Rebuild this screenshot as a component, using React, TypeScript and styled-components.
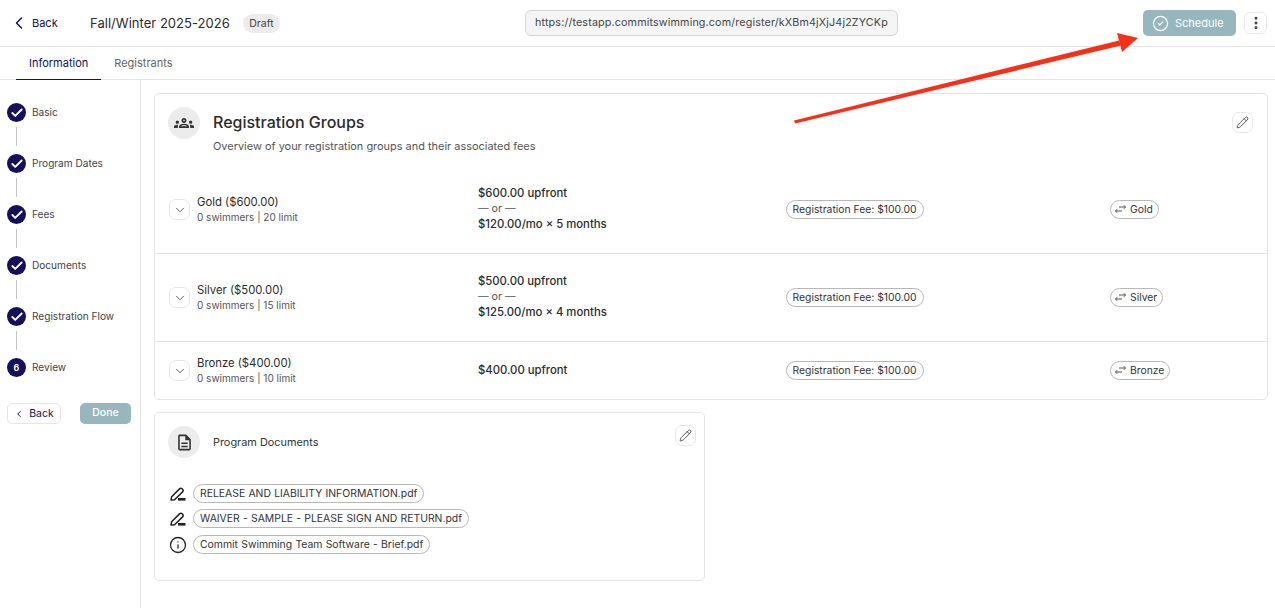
import React from 'react'
import styled, { createGlobalStyle } from 'styled-components'
import { ChevronLeft, ChevronDown, Check, CircleCheck, EllipsisVertical, Pencil, Info } from 'lucide-react'
import { MdOutlineGroups, MdOutlineDescription } from 'react-icons/md'

const Global = createGlobalStyle`
    html, body {
        margin: 0;
        padding: 0;
        background: #fff;
        font-family: Inter, "Liberation Sans", sans-serif;
        color: #2b2b2b;
    }
`

const Page = styled.div`
    position: relative;
    width: 1275px;
    height: 608px;
    overflow: hidden;
    background: #fff;
`

const TopBar = styled.header`
    height: 46px;
    border-bottom: 1px solid #e4e4e4;
    display: grid;
    grid-template-columns: 512px auto 1fr;
    align-items: center;
    padding: 0 8px 0 13px;
`

const TopLeft = styled.div`
    display: flex;
    align-items: center;
`

const BackLink = styled.span`
    display: flex;
    align-items: center;
    gap: 3px;
    width: 77px;
    margin-left: -4px;
    margin-right: 4px;
    font-size: 11px;
    color: #14105a;
`

const ProgramTitle = styled.span`
    font-size: 13px;
    letter-spacing: 0.03px;
    color: #2b2b2b;
    margin-right: 13px;
`

const DraftBadge = styled.span`
    background: #ececec;
    color: #444;
    font-size: 10.5px;
    border-radius: 10px;
    padding: 3px 6.5px;
`

const UrlBox = styled.div`
    width: 373px;
    height: 26px;
    box-sizing: border-box;
    background: #f5f5f5;
    border: 1px solid #d4d4d4;
    border-radius: 6px;
    font-size: 10.75px;
    line-height: 24px;
    letter-spacing: 0.14px;
    text-align: center;
    color: #444;
    white-space: nowrap;
`

const TopRight = styled.div`
    display: flex;
    justify-content: flex-end;
    align-items: center;
    gap: 8px;
`

const ScheduleButton = styled.div`
    width: 93px;
    height: 26px;
    box-sizing: border-box;
    padding-left: 9px;
    background: #97b6bd;
    border-radius: 5px;
    color: #fff;
    font-size: 11px;
    display: flex;
    align-items: center;
    gap: 6px;
`

const MoreButton = styled.div`
    width: 23px;
    height: 22px;
    box-sizing: border-box;
    border: 1px solid #e8e8e8;
    border-radius: 6px;
    display: flex;
    align-items: center;
    justify-content: center;
    color: #444;
`

const TabBar = styled.nav`
    height: 32px;
    border-bottom: 1px solid #e4e4e4;
    padding-left: 16px;
    display: flex;
`

const Tab = styled.span<{ $active?: boolean }>`
    height: 32px;
    box-sizing: content-box;
    padding: 0 13px 0 13px;
    font-size: 11px;
    line-height: 32px;
    color: ${p => (p.$active ? '#14105a' : '#666')};
    border-bottom: ${p => (p.$active ? '1px solid #14105a' : '1px solid transparent')};
`

const Body = styled.div`
    display: flex;
    height: 529px;
`

const Sidebar = styled.aside`
    width: 140px;
    border-right: 1px solid #e4e4e4;
    box-sizing: content-box;
    padding-top: 23px;
`

const Steps = styled.ol`
    list-style: none;
    margin: 0;
    padding: 0 0 0 7px;
`

const Step = styled.li`
    display: flex;
    align-items: flex-start;
    gap: 6px;
    height: 51px;
    position: relative;
`

const StepCircle = styled.span`
    width: 19px;
    height: 19px;
    border-radius: 50%;
    background: #14105a;
    color: #fff;
    font-size: 9px;
    font-weight: 600;
    display: flex;
    align-items: center;
    justify-content: center;
    flex: none;
`

const StepLine = styled.span`
    position: absolute;
    left: 9px;
    top: 24px;
    width: 1px;
    height: 19px;
    background: #c4c4c4;
`

const StepLabel = styled.span`
    font-size: 10.1px;
    line-height: 19px;
    color: #444;
`

const SideActions = styled.div`
    display: flex;
    justify-content: space-between;
    padding: 0 9px 0 7px;
    margin-top: -6px;
`

const SideBack = styled.span`
    width: 54px;
    height: 21px;
    box-sizing: border-box;
    border: 1px solid #e6e6e6;
    border-radius: 5px;
    color: #14105a;
    font-size: 10.5px;
    display: flex;
    align-items: center;
    justify-content: center;
    gap: 5px;
`

const DoneButton = styled.span`
    width: 51px;
    height: 21px;
    background: #97b6bd;
    border-radius: 5px;
    color: #fff;
    font-size: 10.5px;
    font-weight: 500;
    text-align: center;
    line-height: 19px;
`

const Main = styled.main`
    flex: 1;
    padding: 13px 7px 0 13px;
    display: flex;
    flex-direction: column;
    align-items: flex-start;
    gap: 12px;
`

const Card = styled.section<{ $wide?: boolean }>`
    position: relative;
    box-sizing: border-box;
    width: ${p => (p.$wide ? '1114px' : '551px')};
    height: ${p => (p.$wide ? '307px' : '169px')};
    border: 1px solid #e4e4e4;
    border-radius: 5px;
`

const CardHead = styled.div`
    display: flex;
    align-items: flex-start;
    gap: 13px;
    padding: 13px 13px 0 13px;
`

const IconBubble = styled.span`
    width: 32px;
    height: 32px;
    border-radius: 50%;
    background: #ececec;
    color: #333;
    display: flex;
    align-items: center;
    justify-content: center;
    flex: none;
`

const CardTitle = styled.h2`
    margin: 6px 0 0;
    font-size: 16px;
    line-height: 19px;
    font-weight: 500;
    color: #2b2b2b;
`

const CardSub = styled.p`
    margin: 7px 0 0;
    font-size: 10.95px;
    line-height: 14px;
    color: #555;
`

const DocsTitle = styled.h2`
    margin: 9px 0 0;
    font-size: 10.9px;
    line-height: 15px;
    font-weight: 400;
    color: #333;
`

const EditButton = styled.span<{ $small?: boolean }>`
    position: absolute;
    top: ${p => (p.$small ? '12px' : '18px')};
    right: ${p => (p.$small ? '8px' : '14px')};
    width: 21px;
    height: 21px;
    box-sizing: border-box;
    border: 1px solid #e8e8e8;
    border-radius: 7px;
    display: flex;
    align-items: center;
    justify-content: center;
    color: #444;
`

const GroupList = styled.div`
    margin-top: 13px;
`

const GroupRow = styled.div<{ $height: number; $divided: boolean }>`
    box-sizing: border-box;
    height: ${p => p.$height}px;
    display: grid;
    grid-template-columns: 309px 308px 324px 1fr;
    align-items: center;
    padding-left: 14px;
    border-top: ${p => (p.$divided ? '1px solid #e4e4e4' : 'none')};
`

const GroupName = styled.div`
    display: flex;
    align-items: center;
    gap: 7px;
`

const Chevron = styled.span`
    width: 21px;
    height: 21px;
    box-sizing: border-box;
    border: 1px solid #e6e6e6;
    border-radius: 7px;
    display: flex;
    align-items: center;
    justify-content: center;
    color: #555;
    flex: none;
`

const GroupTitle = styled.div`
    font-size: 11.3px;
    line-height: 15px;
    color: #2b2b2b;
`

const GroupMeta = styled.div`
    font-size: 10px;
    line-height: 15px;
    color: #555;
`

const PriceBlock = styled.div`
    margin-bottom: 2px;
`

const Price = styled.div`
    font-size: 11.3px;
    line-height: 16px;
    font-weight: 500;
    color: #2b2b2b;
`

const PriceOr = styled.div`
    font-size: 10.6px;
    line-height: 15px;
    color: #555;
`

const Pill = styled.span`
    display: inline-flex;
    align-items: center;
    justify-self: start;
    height: 19px;
    box-sizing: border-box;
    border: 1px solid #b8b8b8;
    border-radius: 10px;
    padding: 0 6.5px 1px 5.5px;
    font-size: 10.35px;
    color: #333;
    white-space: nowrap;
`

const TagPill = styled(Pill)`
    gap: 4px;
    padding: 0 5px 1px 4px;
`

const DocPill = styled(Pill)`
    font-size: 10.4px;
    padding: 0 6px 1px;
    word-spacing: 0.35px;
`

const DocList = styled.div`
    margin-top: 26px;
    padding-left: 14px;
    display: flex;
    flex-direction: column;
`

const DocRow = styled.div<{ $gap: number }>`
    display: flex;
    align-items: center;
    gap: 6px;
    height: 19px;
    margin-bottom: ${p => p.$gap}px;
    color: #222;
`

const DocIcon = styled.span`
    width: 18px;
    display: flex;
    justify-content: center;
`

const Arrow = styled.svg`
    position: absolute;
    left: 0;
    top: 0;
    pointer-events: none;
`

const SwapIcon: React.FC = () => (
    <svg width="11" height="10" viewBox="0 0 11 10" fill="none" stroke="#555" strokeWidth="1">
        <path d="M4 3h6.5M8.8 1.2 10.5 3 8.8 4.8" />
        <path d="M7 7H.5M2.2 5.2.5 7l1.7 1.8" />
    </svg>
)

const SignIcon: React.FC = () => (
    <svg width="16" height="14" viewBox="0 0 16 14" fill="none" stroke="currentColor" strokeWidth="1.5" strokeLinejoin="round">
        <path d="M1 13l.6-3.2 8.2-8.2a1.4 1.4 0 0 1 2 0l1 1a1.4 1.4 0 0 1 0 2L4.6 12.8Z" />
        <rect x="8" y="11" width="7.5" height="2.6" fill="currentColor" stroke="none" />
    </svg>
)

const steps = ['Basic', 'Program Dates', 'Fees', 'Documents', 'Registration Flow', 'Review']

const groups = [
    { name: 'Gold ($600.00)', meta: '0 swimmers | 20 limit', upfront: '$600.00 upfront', monthly: '$120.00/mo × 5 months', tag: 'Gold', height: 87 },
    { name: 'Silver ($500.00)', meta: '0 swimmers | 15 limit', upfront: '$500.00 upfront', monthly: '$125.00/mo × 4 months', tag: 'Silver', height: 88 },
    { name: 'Bronze ($400.00)', meta: '0 swimmers | 10 limit', upfront: '$400.00 upfront', tag: 'Bronze', height: 58 },
]

const App: React.FC = () => {
    return (
        <Page>
            <Global />
            <TopBar>
                <TopLeft>
                    <BackLink>
                        <ChevronLeft size={20} strokeWidth={1.8} />
                        Back
                    </BackLink>
                    <ProgramTitle>Fall/Winter 2025-2026</ProgramTitle>
                    <DraftBadge>Draft</DraftBadge>
                </TopLeft>
                <UrlBox>https://testapp.commitswimming.com/register/kXBm4jXjJ4j2ZYCKp</UrlBox>
                <TopRight>
                    <ScheduleButton>
                        <CircleCheck size={17} strokeWidth={1.7} />
                        Schedule
                    </ScheduleButton>
                    <MoreButton>
                        <EllipsisVertical size={16} strokeWidth={2.4} />
                    </MoreButton>
                </TopRight>
            </TopBar>
            <TabBar>
                <Tab $active>Information</Tab>
                <Tab>Registrants</Tab>
            </TabBar>
            <Body>
                <Sidebar>
                    <Steps>
                        {steps.map((s, i) => (
                            <Step key={s}>
                                <StepCircle>
                                    {i < 5 ? <Check size={14} strokeWidth={3.2} /> : 6}
                                </StepCircle>
                                {i < 5 && <StepLine />}
                                <StepLabel>{s}</StepLabel>
                            </Step>
                        ))}
                    </Steps>
                    <SideActions>
                        <SideBack>
                            <ChevronLeft size={10} strokeWidth={2.4} />
                            Back
                        </SideBack>
                        <DoneButton>Done</DoneButton>
                    </SideActions>
                </Sidebar>
                <Main>
                    <Card $wide>
                        <CardHead>
                            <IconBubble>
                                <MdOutlineGroups size={20} />
                            </IconBubble>
                            <div>
                                <CardTitle>Registration Groups</CardTitle>
                                <CardSub>Overview of your registration groups and their associated fees</CardSub>
                            </div>
                        </CardHead>
                        <EditButton>
                            <Pencil size={13} strokeWidth={1.6} />
                        </EditButton>
                        <GroupList>
                            {groups.map((g, i) => (
                                <GroupRow key={g.tag} $height={g.height} $divided={i > 0}>
                                    <GroupName>
                                        <Chevron>
                                            <ChevronDown size={14} strokeWidth={1.6} />
                                        </Chevron>
                                        <div>
                                            <GroupTitle>{g.name}</GroupTitle>
                                            <GroupMeta>{g.meta}</GroupMeta>
                                        </div>
                                    </GroupName>
                                    <PriceBlock>
                                        <Price>{g.upfront}</Price>
                                        {g.monthly && <PriceOr>— or —</PriceOr>}
                                        {g.monthly && <Price>{g.monthly}</Price>}
                                    </PriceBlock>
                                    <Pill>Registration Fee: $100.00</Pill>
                                    <TagPill>
                                        <SwapIcon />
                                        {g.tag}
                                    </TagPill>
                                </GroupRow>
                            ))}
                        </GroupList>
                    </Card>
                    <Card>
                        <CardHead>
                            <IconBubble>
                                <MdOutlineDescription size={19} />
                            </IconBubble>
                            <DocsTitle>Program Documents</DocsTitle>
                        </CardHead>
                        <EditButton $small>
                            <Pencil size={13} strokeWidth={1.6} />
                        </EditButton>
                        <DocList>
                            <DocRow $gap={6}>
                                <DocIcon><SignIcon /></DocIcon>
                                <DocPill>RELEASE AND LIABILITY INFORMATION.pdf</DocPill>
                            </DocRow>
                            <DocRow $gap={7}>
                                <DocIcon><SignIcon /></DocIcon>
                                <DocPill>WAIVER - SAMPLE - PLEASE SIGN AND RETURN.pdf</DocPill>
                            </DocRow>
                            <DocRow $gap={0}>
                                <DocIcon><Info size={18} strokeWidth={1.7} /></DocIcon>
                                <DocPill>Commit Swimming Team Software - Brief.pdf</DocPill>
                            </DocRow>
                        </DocList>
                    </Card>
                </Main>
            </Body>
            <Arrow width="1275" height="608" viewBox="0 0 1275 608">
                <polygon points="794,120.5 1119,40.5 1121,45.5 795,123.5" fill="#f7301a" />
                <polygon points="1138,38 1122,52 1117,33" fill="#f7301a" />
            </Arrow>
        </Page>
    )
}

export default App
